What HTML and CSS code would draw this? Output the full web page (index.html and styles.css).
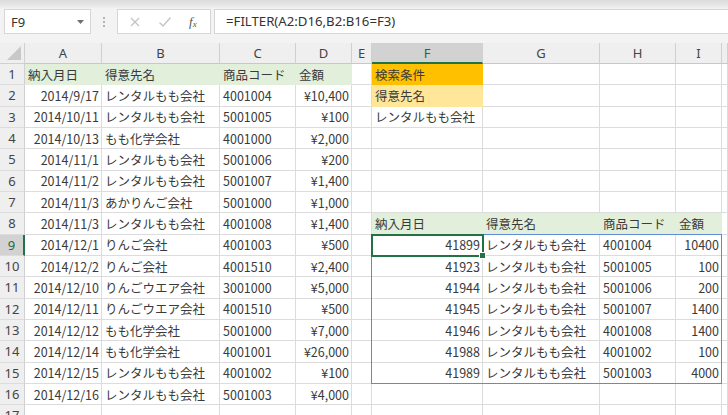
FILE: index.html
```html
<!DOCTYPE html>
<html lang="ja">
<head>
<meta charset="utf-8">
<title>FILTER</title>
<link rel="stylesheet" href="styles.css">
</head>
<body>
<div class="app">
  <div class="toolbar">
    <div class="namebox"><span>F9</span><svg class="dd" width="7" height="4" viewBox="0 0 7 4"><path d="M0 0H7L3.5 4Z" fill="#707070"/></svg></div>
    <div class="grip"><i></i><i></i><i></i></div>
    <div class="fnbox">
      <svg width="12" height="12" viewBox="0 0 12 12"><path d="M2 2L10 10M10 2L2 10" stroke="#c3c3c3" stroke-width="1.3" fill="none"/></svg>
      <svg width="14" height="12" viewBox="0 0 14 12"><path d="M1.5 6.5L5 10L12.5 1.5" stroke="#c3c3c3" stroke-width="1.3" fill="none"/></svg>
      <span class="fx">f<sub>x</sub></span>
    </div>
    <div class="formula">=FILTER(A2:D16,B2:B16=F3)</div>
  </div>
  <div class="sheet">
    <div class="row head">
      <div class="corner"><svg width="14" height="14" viewBox="0 0 14 14"><path d="M14 0V14H0Z" fill="#c8c8c8"/></svg></div>
      <div class="ch">A</div><div class="ch">B</div><div class="ch">C</div><div class="ch">D</div><div class="ch">E</div><div class="ch sel">F</div><div class="ch">G</div><div class="ch">H</div><div class="ch">I</div><div class="ch"></div>
    </div>
    <div class="row"><div class="rh">1</div><div class="c g">納入月日</div><div class="c g">得意先名</div><div class="c g">商品コード</div><div class="c g">金額</div><div class="c"></div><div class="c o">検索条件</div><div class="c"></div><div class="c"></div><div class="c"></div><div class="c"></div></div>
    <div class="row"><div class="rh">2</div><div class="c r">2014/9/17</div><div class="c">レンタルもも会社</div><div class="c">4001004</div><div class="c r">¥10,400</div><div class="c"></div><div class="c lo">得意先名</div><div class="c"></div><div class="c"></div><div class="c"></div><div class="c"></div></div>
    <div class="row"><div class="rh">3</div><div class="c r">2014/10/11</div><div class="c">レンタルもも会社</div><div class="c">5001005</div><div class="c r">¥100</div><div class="c"></div><div class="c">レンタルもも会社</div><div class="c"></div><div class="c"></div><div class="c"></div><div class="c"></div></div>
    <div class="row"><div class="rh">4</div><div class="c r">2014/10/13</div><div class="c">もも化学会社</div><div class="c">4001000</div><div class="c r">¥2,000</div><div class="c"></div><div class="c"></div><div class="c"></div><div class="c"></div><div class="c"></div><div class="c"></div></div>
    <div class="row"><div class="rh">5</div><div class="c r">2014/11/1</div><div class="c">レンタルもも会社</div><div class="c">5001006</div><div class="c r">¥200</div><div class="c"></div><div class="c"></div><div class="c"></div><div class="c"></div><div class="c"></div><div class="c"></div></div>
    <div class="row"><div class="rh">6</div><div class="c r">2014/11/2</div><div class="c">レンタルもも会社</div><div class="c">5001007</div><div class="c r">¥1,400</div><div class="c"></div><div class="c"></div><div class="c"></div><div class="c"></div><div class="c"></div><div class="c"></div></div>
    <div class="row"><div class="rh">7</div><div class="c r">2014/11/3</div><div class="c">あかりんご会社</div><div class="c">5001000</div><div class="c r">¥1,000</div><div class="c"></div><div class="c"></div><div class="c"></div><div class="c"></div><div class="c"></div><div class="c"></div></div>
    <div class="row"><div class="rh">8</div><div class="c r">2014/11/3</div><div class="c">レンタルもも会社</div><div class="c">4001008</div><div class="c r">¥1,400</div><div class="c"></div><div class="c g">納入月日</div><div class="c g">得意先名</div><div class="c g">商品コード</div><div class="c g">金額</div><div class="c"></div></div>
    <div class="row"><div class="rh sel">9</div><div class="c r">2014/12/1</div><div class="c">りんご会社</div><div class="c">4001003</div><div class="c r">¥500</div><div class="c"></div><div class="c r">41899</div><div class="c">レンタルもも会社</div><div class="c">4001004</div><div class="c r">10400</div><div class="c"></div></div>
    <div class="row"><div class="rh">10</div><div class="c r">2014/12/2</div><div class="c">りんご会社</div><div class="c">4001510</div><div class="c r">¥2,400</div><div class="c"></div><div class="c r">41923</div><div class="c">レンタルもも会社</div><div class="c">5001005</div><div class="c r">100</div><div class="c"></div></div>
    <div class="row"><div class="rh">11</div><div class="c r">2014/12/10</div><div class="c">りんごウエア会社</div><div class="c">3001000</div><div class="c r">¥5,000</div><div class="c"></div><div class="c r">41944</div><div class="c">レンタルもも会社</div><div class="c">5001006</div><div class="c r">200</div><div class="c"></div></div>
    <div class="row"><div class="rh">12</div><div class="c r">2014/12/11</div><div class="c">りんごウエア会社</div><div class="c">4001510</div><div class="c r">¥500</div><div class="c"></div><div class="c r">41945</div><div class="c">レンタルもも会社</div><div class="c">5001007</div><div class="c r">1400</div><div class="c"></div></div>
    <div class="row"><div class="rh">13</div><div class="c r">2014/12/12</div><div class="c">もも化学会社</div><div class="c">5001000</div><div class="c r">¥7,000</div><div class="c"></div><div class="c r">41946</div><div class="c">レンタルもも会社</div><div class="c">4001008</div><div class="c r">1400</div><div class="c"></div></div>
    <div class="row"><div class="rh">14</div><div class="c r">2014/12/14</div><div class="c">もも化学会社</div><div class="c">4001001</div><div class="c r">¥26,000</div><div class="c"></div><div class="c r">41988</div><div class="c">レンタルもも会社</div><div class="c">4001002</div><div class="c r">100</div><div class="c"></div></div>
    <div class="row"><div class="rh">15</div><div class="c r">2014/12/15</div><div class="c">レンタルもも会社</div><div class="c">4001002</div><div class="c r">¥100</div><div class="c"></div><div class="c r">41989</div><div class="c">レンタルもも会社</div><div class="c">5001003</div><div class="c r">4000</div><div class="c"></div></div>
    <div class="row"><div class="rh">16</div><div class="c r">2014/12/16</div><div class="c">レンタルもも会社</div><div class="c">5001003</div><div class="c r">¥4,000</div><div class="c"></div><div class="c"></div><div class="c"></div><div class="c"></div><div class="c"></div><div class="c"></div></div>
    <div class="row"><div class="rh">17</div><div class="c"></div><div class="c"></div><div class="c"></div><div class="c"></div><div class="c"></div><div class="c"></div><div class="c"></div><div class="c"></div><div class="c"></div><div class="c"></div></div>
    <div class="spill"></div>
    <div class="active"><i class="handle"></i></div>
  </div>
</div>
</body>
</html>
```

FILE: styles.css
```css
html, body {
  margin: 0;
  padding: 0;
  background: #ffffff;
}
body {
  font-family: "Noto Sans CJK JP", "Noto Sans", sans-serif;
  color: #3a3a3a;
  overflow: hidden;
}
.app {
  width: 728px;
  height: 415px;
  overflow: hidden;
}
.toolbar {
  height: 43px;
  box-sizing: border-box;
  padding-top: 9px;
  display: flex;
  align-items: flex-start;
  background: linear-gradient(#dcdcdc 0px, #e9e9e9 6px, #f3f3f3 9px, #f3f3f3 100%);
  font-family: "Noto Sans", "Open Sans", sans-serif;
}
.namebox {
  margin-left: 4px;
  width: 87px;
  height: 25px;
  box-sizing: border-box;
  background: #fff;
  border: 1px solid #d6d6d6;
  display: flex;
  align-items: center;
  justify-content: space-between;
  padding: 0 6px 0 6px;
  font-size: 13px;
  color: #333;
}
.namebox .dd { margin-top: 1px; }
.grip {
  width: 26px;
  height: 25px;
  display: flex;
  flex-direction: column;
  align-items: center;
  justify-content: center;
  gap: 2px;
}
.grip i {
  display: block;
  width: 2px;
  height: 2px;
  background: #b5b5b5;
}
.fnbox {
  width: 94px;
  height: 25px;
  box-sizing: border-box;
  background: #fff;
  border: 1px solid #d6d6d6;
  display: flex;
  align-items: center;
  padding-left: 11px;
  gap: 17px;
}
.fx {
  font-family: "Liberation Serif", "DejaVu Serif", serif;
  font-style: italic;
  font-size: 13px;
  color: #555;
  line-height: 1;
}
.fx sub {
  font-size: 9px;
  vertical-align: -1px;
}
.formula {
  margin-left: 3px;
  flex: 1;
  height: 25px;
  box-sizing: border-box;
  background: #fff;
  border: 1px solid #d6d6d6;
  border-right: none;
  padding-left: 11px;
  font-size: 13.2px;
  line-height: 23px;
  color: #333;
}
.sheet {
  position: relative;
}
.row {
  display: grid;
  grid-template-columns: 25px 77px 118px 76px 56px 20px 111px 117px 76px 46px 1fr;
  height: 21.333px;
}
.row.head {
  height: 21px;
  background: #efefef;
  font-family: "Noto Sans", "Open Sans", sans-serif;
  font-size: 13px;
  color: #444;
}
.corner {
  border-right: 1px solid #d0d0d0;
  border-bottom: 1px solid #d0d0d0;
  box-sizing: border-box;
  display: flex;
  align-items: flex-end;
  justify-content: flex-end;
  padding: 0 3px 3px 0;
}
.ch {
  box-sizing: border-box;
  border-right: 1px solid #d0d0d0;
  border-bottom: 1px solid #c8c8c8;
  display: flex;
  align-items: center;
  justify-content: center;
}
.ch.sel {
  background: #d2d2d2;
  color: #1e6b40;
  border-bottom: 2px solid #217346;
}
.rh {
  box-sizing: border-box;
  background: #efefef;
  border-right: 1px solid #d0d0d0;
  border-bottom: 1px solid #dcdcdc;
  display: flex;
  align-items: center;
  justify-content: center;
  font-family: "Noto Sans", "Open Sans", sans-serif;
  font-size: 13px;
  color: #444;
}
.rh.sel {
  background: #d2d2d2;
  color: #1e6b40;
  border-right: 2px solid #217346;
}
.c {
  box-sizing: border-box;
  border-right: 1px solid #dcdcdc;
  border-bottom: 1px solid #dcdcdc;
  display: flex;
  align-items: center;
  padding: 0 2px 0 3px;
  font-size: 12.5px;
  white-space: nowrap;
  overflow: hidden;
}
.c.r {
  justify-content: flex-end;
}
.c.g {
  background: #e2efda;
  border-color: #e2efda;
}
.c.o {
  background: #ffc000;
  border-color: #ffc000;
}
.c.lo {
  background: #ffe699;
  border-color: #ffe699;
}
.spill {
  position: absolute;
  left: 371px;
  top: 191px;
  width: 351px;
  height: 150px;
  box-sizing: border-box;
  border: 1px solid #5f8ad6;
  pointer-events: none;
}
.active {
  position: absolute;
  left: 371px;
  top: 191px;
  width: 113px;
  height: 23px;
  box-sizing: border-box;
  border: 2px solid #217346;
}
.handle {
  position: absolute;
  right: -4px;
  bottom: -4px;
  width: 5px;
  height: 5px;
  background: #217346;
  border: 1px solid #fff;
}
```
